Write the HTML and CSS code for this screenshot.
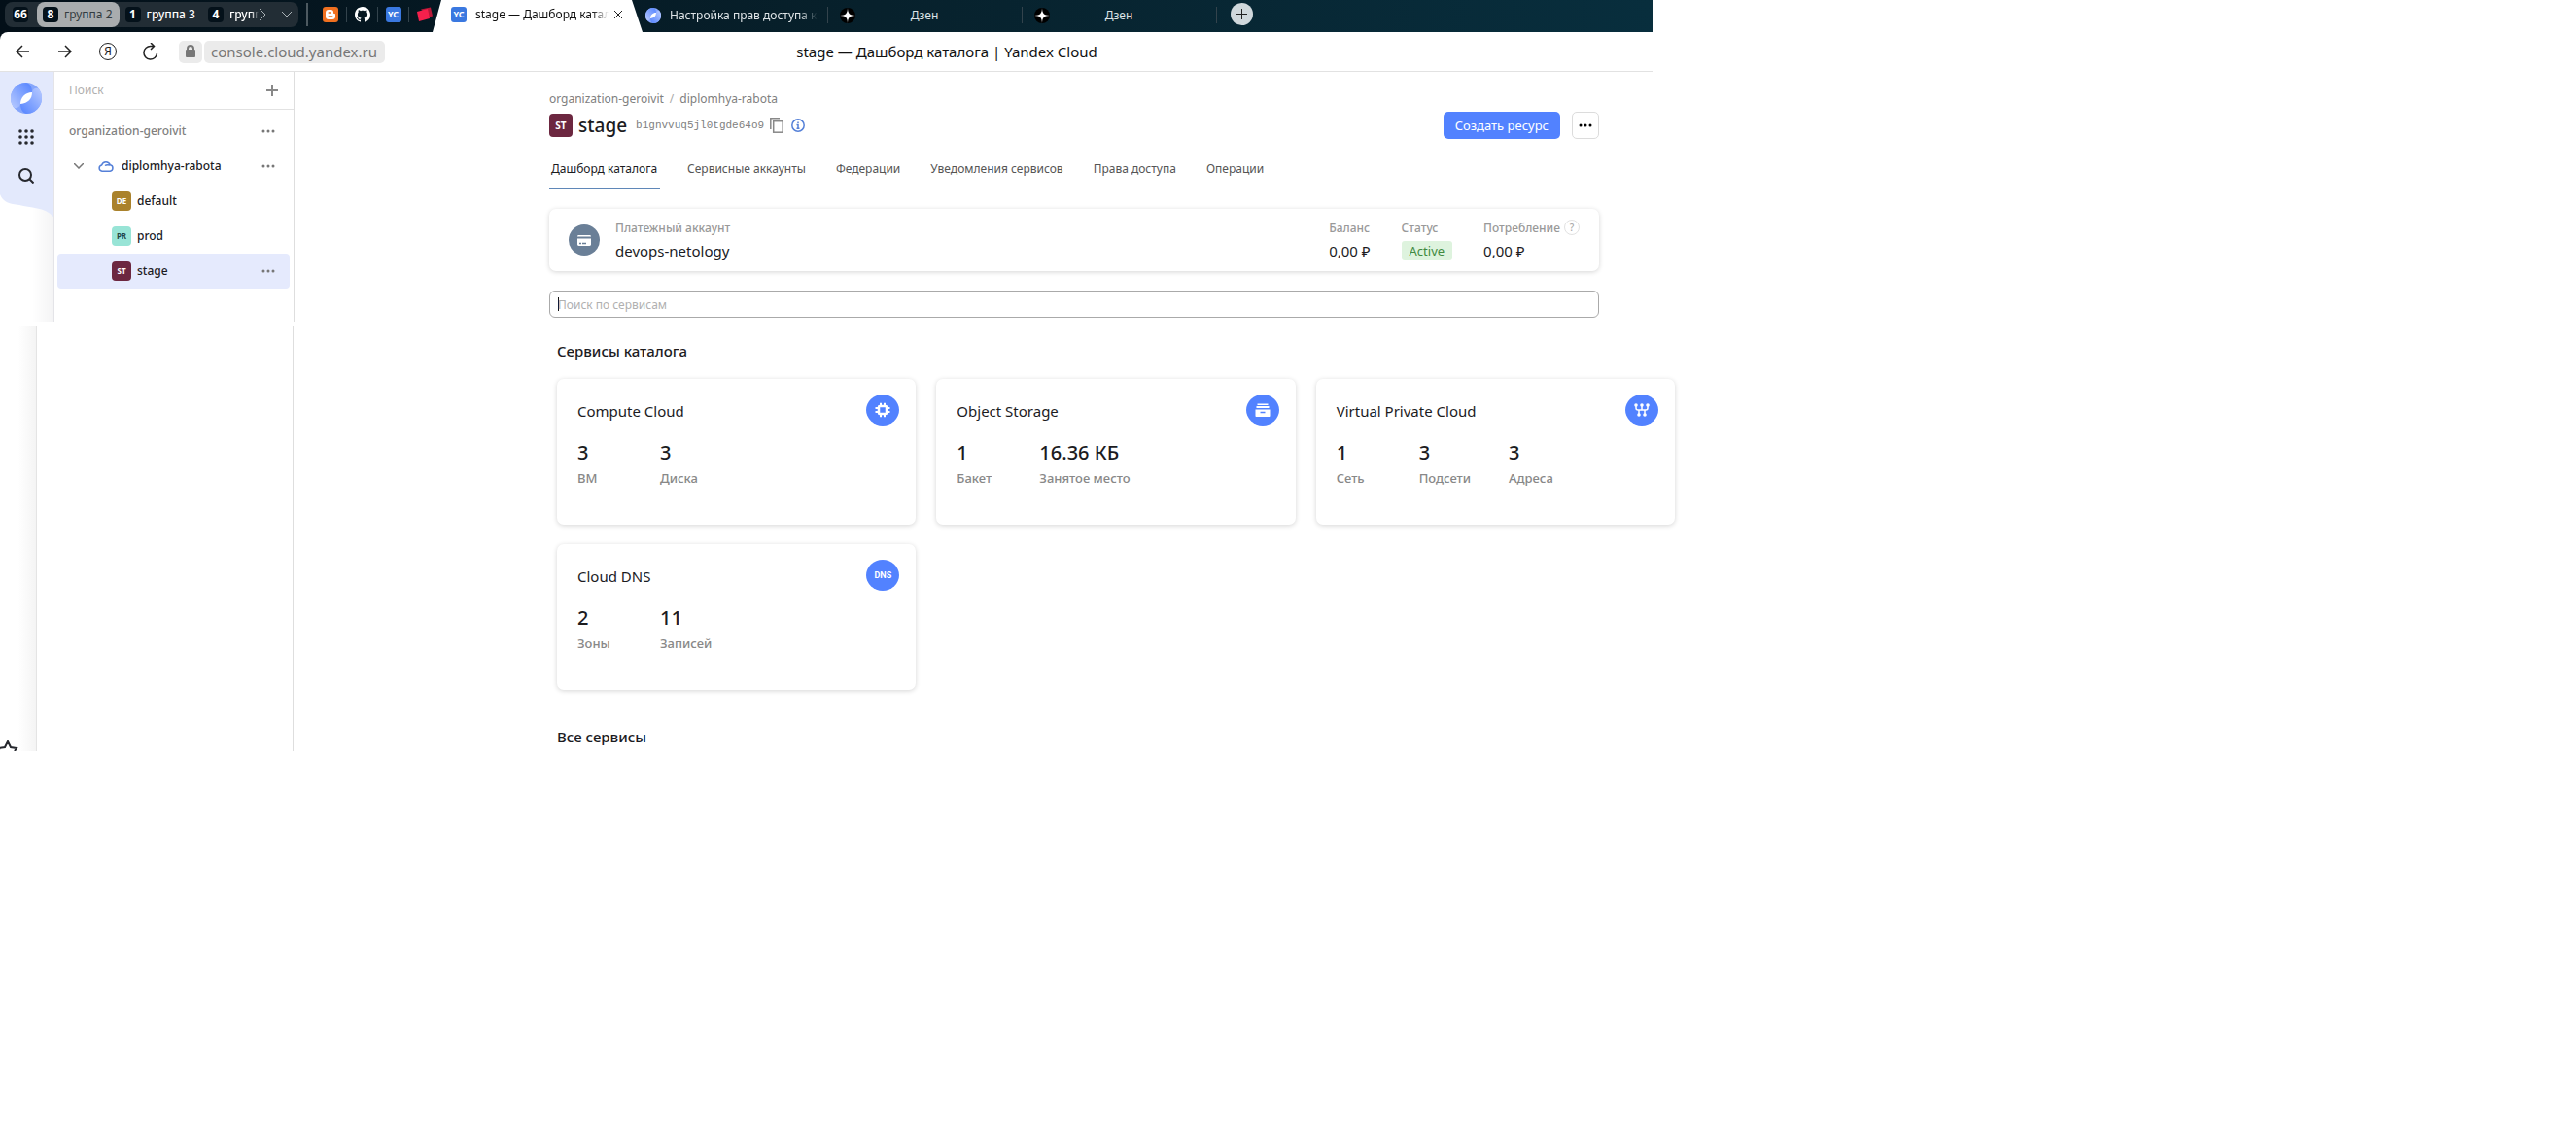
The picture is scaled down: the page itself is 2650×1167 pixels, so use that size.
FILE: index.html
```html
<!DOCTYPE html>
<html lang="ru">
<head>
<meta charset="utf-8">
<meta name="viewport" content="width=device-width, initial-scale=1">
<title>stage — Дашборд каталога | Yandex Cloud</title>
<link rel="stylesheet" href="styles.css">
</head>
<body>
<svg class="defs" aria-hidden="true">
  <defs>
    <linearGradient id="logoA" x1="0" y1="1" x2="1" y2="0"><stop offset="0" stop-color="#b9cbff"/><stop offset="1" stop-color="#5282ff"/></linearGradient>
    <linearGradient id="logoB" x1="0" y1="1" x2="1" y2="0"><stop offset="0" stop-color="#5282ff"/><stop offset="1" stop-color="#b9cbff"/></linearGradient>
    <symbol id="logo" viewBox="0 0 32 32">
      <circle cx="16" cy="16" r="16" fill="#86a6fb"/>
      <path d="M16 0a16 16 0 0 0-13 25.400C6 27 9 26 10 22c0-7 5-11 12-12C22 5 20 1 16 0z" fill="url(#logoA)"/>
      <path d="M16 32A16 16 0 0 0 29 6.600C26 5 23 6 22 10c0 7-5 11-12 12 0 5 2 9 6 10z" fill="url(#logoB)"/>
      <path d="M22 10c0 7-4 11-12 12 0-7 5-12 12-12z" fill="#fff"/>
    </symbol>
    <symbol id="dots" viewBox="0 0 14 4"><circle cx="2" cy="2" r="1.500"/><circle cx="7" cy="2" r="1.500"/><circle cx="12" cy="2" r="1.500"/></symbol>
    <symbol id="zen" viewBox="0 0 16 16"><circle cx="8" cy="8" r="8" fill="#000"/><path d="M8 0c.2 6 2 7.800 8 8-6 .2-7.800 2-8 8-.2-6-2-7.800-8-8 6-.2 7.800-2 8-8z" fill="#fff"/></symbol>
  </defs>
</svg>
<div class="window">
  <header class="chrome">
    <div class="strip">
      <div class="groups">
        <button class="group"><b class="count">66</b></button>
        <button class="group current"><b class="count">8</b>группа 2</button>
        <button class="group"><b class="count">1</b>группа 3</button>
        <button class="group cut"><b class="count">4</b><span class="fade">групп</span><svg width="8" height="12" viewBox="0 0 8 12"><path d="M1 0l6 6-6 6"/></svg></button>
        <button class="group more" aria-label="Все группы"><svg width="10" height="6" viewBox="0 0 10 6"><path d="M0 0l5 5 5-5"/></svg></button>
      </div>
      <div class="pins">
        <button class="pin" aria-label="Blogger"><svg width="16" height="16" viewBox="0 0 16 16"><rect width="16" height="16" rx="3" fill="#f07020"/><path d="M6 3h2.500A2.500 2.500 0 0 1 11 5.500c0 1 .3 1.500 1 1.500s1 .4 1 1v2a3 3 0 0 1-3 3H6a3 3 0 0 1-3-3V6a3 3 0 0 1 3-3z" fill="#fff"/><path d="M6.200 6h2M6.200 10h3.600" stroke="#f07020" stroke-width="1.500" stroke-linecap="round"/></svg></button>
        <button class="pin" aria-label="GitHub"><svg width="16" height="16" viewBox="0 0 16 16"><path fill="#fff" d="M8 0C3.580 0 0 3.580 0 8c0 3.540 2.290 6.530 5.470 7.590.4.070.55-.17.55-.38 0-.19-.010-.82-.010-1.490-2.010.37-2.530-.49-2.690-.94-.090-.23-.48-.94-.82-1.130-.28-.15-.68-.52-.010-.53.63-.010 1.080.58 1.230.82.720 1.210 1.870.87 2.330.66.070-.52.280-.87.510-1.070-1.780-.2-3.640-.89-3.640-3.950 0-.87.310-1.590.82-2.150-.080-.2-.36-1.020.080-2.120 0 0 .67-.21 2.200.82.640-.18 1.320-.27 2-.27s1.360.090 2 .27c1.530-1.040 2.200-.82 2.200-.82.440 1.100.16 1.920.080 2.120.51.560.82 1.270.82 2.150 0 3.070-1.870 3.750-3.650 3.950.29.250.54.730.54 1.480 0 1.070-.010 1.930-.010 2.200 0 .21.150.46.550.38A8 8 0 0 0 16 8c0-4.420-3.580-8-8-8z"/></svg></button>
        <button class="pin"><b class="yc">YC</b></button>
        <button class="pin" aria-label="Книги"><svg width="16" height="16" viewBox="0 0 16 16"><path d="M4 2.500L14 .5l2 9-3 1z" fill="#b81838"/><path d="M0 5l11-3 2 10L2 15z" fill="#f4204c"/></svg></button>
      </div>
      <div class="tab active"><b class="yc">YC</b><span class="fade">stage — Дашборд каталога</span><button class="close" aria-label="Закрыть вкладку"><svg width="8" height="8" viewBox="0 0 8 8"><path d="M0 0l8 8M8 0L0 8"/></svg></button></div>
      <div class="tab"><svg width="16" height="16"><use href="#logo"/></svg><span class="fade">Настройка прав доступа к</span></div>
      <div class="tab short"><svg width="16" height="16"><use href="#zen"/></svg><span>Дзен</span></div>
      <div class="tab short"><svg width="16" height="16"><use href="#zen"/></svg><span>Дзен</span></div>
      <button class="newtab" aria-label="Новая вкладка"><svg width="11" height="11" viewBox="0 0 11 11"><path d="M5.500 0v11M0 5.500h11"/></svg></button>
    </div>
    <div class="toolbar">
      <button class="tool" aria-label="Назад"><svg width="14" height="14" viewBox="0 0 14 14"><path d="M14 7H1M7 1L1 7l6 6"/></svg></button>
      <button class="tool" aria-label="Вперёд"><svg width="14" height="14" viewBox="0 0 14 14"><path d="M0 7h13M7 1l6 6-6 6"/></svg></button>
      <button class="tool ya">Я</button>
      <button class="tool" aria-label="Обновить"><svg width="16" height="18" viewBox="0 0 16 18"><path d="M14.500 11A6.800 6.800 0 1 1 8 3.500h3M8 0l3.500 3.500L8 7"/></svg></button>
      <div class="address">
        <span class="lock"><svg width="12" height="14" viewBox="0 0 12 14"><path d="M3 6V4a3 3 0 0 1 6 0v2" fill="none" stroke="#777" stroke-width="2"/><rect x="1" y="5" width="10" height="8" rx="1" fill="#777"/></svg></span>
        <a class="url" href="#">console.cloud.yandex.ru</a>
      </div>
      <div class="pagetitle">stage — Дашборд каталога | Yandex Cloud</div>
    </div>
  </header>

  <div class="workspace">
    <aside class="side">
      <div class="side-top">
        <nav class="rail">
          <svg class="wave" width="55" height="149" viewBox="0 0 55 149" aria-hidden="true"><path d="M0 0h55v149C46 139 31 140 20 137 10 136 3 134 0 126z" fill="#e3e9fc"/></svg>
          <a href="#" aria-label="Yandex Cloud"><svg width="32" height="32"><use href="#logo"/></svg></a>
          <button aria-label="Все сервисы"><svg width="16" height="16" viewBox="0 0 16 16" fill="#26282e"><circle cx="2" cy="2" r="1.800"/><circle cx="8" cy="2" r="1.800"/><circle cx="14" cy="2" r="1.800"/><circle cx="2" cy="8" r="1.800"/><circle cx="8" cy="8" r="1.800"/><circle cx="14" cy="8" r="1.800"/><circle cx="2" cy="14" r="1.800"/><circle cx="8" cy="14" r="1.800"/><circle cx="14" cy="14" r="1.800"/></svg></button>
          <button aria-label="Поиск"><svg width="16" height="16" viewBox="0 0 16 16" fill="none" stroke="#26282e" stroke-width="2"><circle cx="7" cy="7" r="6"/><path d="M11.500 11.500l4 4"/></svg></button>
        </nav>
        <div class="tree">
          <div class="find"><input type="text" placeholder="Поиск" aria-label="Поиск"><button aria-label="Добавить"><svg width="12" height="12" viewBox="0 0 12 12"><path d="M6 0v12M0 6h12"/></svg></button></div>
          <ul class="nodes">
            <li class="node org"><a href="#">organization-geroivit</a><button aria-label="Действия"><svg width="14" height="4"><use href="#dots"/></svg></button></li>
            <li class="node cloud"><svg width="10" height="6" viewBox="0 0 10 6"><path d="M0 0l5 5 5-5" fill="none" stroke="#777" stroke-width="1.500"/></svg><svg width="16" height="12" viewBox="0 0 16 12"><path d="M4 11.200a3.200 3.200 0 0 1-.4-6.300A4.600 4.600 0 0 1 12.300 4.700a3.300 3.300 0 0 1-.1 6.500zM7 5.500c1-.8 3-1 5-.5" fill="none" stroke="#5580d8" stroke-width="1.500"/></svg><a href="#">diplomhya-rabota</a><button aria-label="Действия"><svg width="14" height="4"><use href="#dots"/></svg></button></li>
            <li class="node folder"><b class="badge de">DE</b><a href="#">default</a></li>
            <li class="node folder"><b class="badge pr">PR</b><a href="#">prod</a></li>
            <li class="node folder selected"><b class="badge st">ST</b><a href="#">stage</a><button aria-label="Действия"><svg width="14" height="4"><use href="#dots"/></svg></button></li>
          </ul>
        </div>
      </div>
      <div class="side-bottom">
        <div class="rail-lower"><button aria-label="Избранное"><svg width="20" height="11" viewBox="0 0 20 11"><path d="M-4 12l3-3-1-1 7-1 3-6 3 6 6 1-2 3" fill="none" stroke="#26282e" stroke-width="2"/></svg></button></div>
      </div>
    </aside>

    <main class="main">
      <nav class="crumbs"><a href="#">organization-geroivit</a><i>/</i><a href="#">diplomhya-rabota</a></nav>
      <div class="head">
        <b class="badge st big">ST</b>
        <h1>stage</h1>
        <code>b1gnvvuq5jl0tgde64o9</code>
        <button class="bare" aria-label="Скопировать"><svg width="14" height="16" viewBox="0 0 14 16" fill="none" stroke="#888" stroke-width="1.500"><path d="M.8 12V.8H10"/><rect x="3.700" y="3.700" width="9.500" height="11.500"/></svg></button>
        <button class="bare" aria-label="Информация"><svg width="14" height="14" viewBox="0 0 14 14"><circle cx="7" cy="7" r="6.200" fill="none" stroke="#5580d8" stroke-width="1.500"/><path d="M5.500 6.500H7V10M5.500 10.200h3M7 3.500v1.500" fill="none" stroke="#5580d8" stroke-width="1.500"/></svg></button>
        <button class="create">Создать ресурс</button>
        <button class="actions" aria-label="Действия"><svg width="14" height="4"><use href="#dots"/></svg></button>
      </div>
      <nav class="tabs"><a class="on" href="#">Дашборд каталога</a><a href="#">Сервисные аккаунты</a><a href="#">Федерации</a><a href="#">Уведомления сервисов</a><a href="#">Права доступа</a><a href="#">Операции</a></nav>
      <section class="billing">
        <svg class="bill-icon" width="32" height="32" viewBox="0 0 32 32"><circle cx="16" cy="16" r="16" fill="#6a7f97"/><path d="M9 12.500c0-1 .5-1.500 1.500-1.500h11c1 0 1.500.5 1.500 1.500zM9 14.500h14v6c0 .7-.5 1.500-1.500 1.500h-11c-1 0-1.500-.8-1.500-1.500z" fill="#fff"/><path d="M11 19.500h2M14 19.500h4" stroke="#6a7f97" stroke-width="1.500"/></svg>
        <dl class="fact grow"><dt>Платежный аккаунт</dt><dd>devops-netology</dd></dl>
        <dl class="fact"><dt>Баланс</dt><dd>0,00 ₽</dd></dl>
        <dl class="fact"><dt>Статус</dt><dd class="status">Active</dd></dl>
        <dl class="fact"><dt>Потребление<button class="help" aria-label="Справка">?</button></dt><dd>0,00 ₽</dd></dl>
      </section>
      <input class="search" type="text" placeholder="Поиск по сервисам" aria-label="Поиск по сервисам">

      <section class="services">
        <h2>Сервисы каталога</h2>
        <div class="grid">
          <article class="card">
            <header><h3>Compute Cloud</h3><span class="disc"><svg width="16" height="16" viewBox="0 0 16 16" fill="none" stroke="#fff"><rect x="4" y="4" width="8" height="8" rx="1" stroke-width="2.500"/><path d="M6 .8V4M10 .8V4M6 12v3.200M10 12v3.200M.5 6H4M.5 10H4M12 6h3.500M12 10h3.500" stroke-width="2"/></svg></span></header>
            <div class="stats"><dl><dd>3</dd><dt>ВМ</dt></dl><dl><dd>3</dd><dt>Диска</dt></dl></div>
          </article>
          <article class="card">
            <header><h3>Object Storage</h3><span class="disc"><svg width="16" height="16" viewBox="0 0 16 16"><path d="M2.500 1.500h11v1.500h-11zM1.500 4h13v2h-13zM.5 7.500h15V14c0 .6-.4 1-1 1h-13c-.6 0-1-.4-1-1z" fill="#fff"/><path d="M5.500 10.500h5" stroke="#5282ff" stroke-width="1.500"/></svg></span></header>
            <div class="stats"><dl><dd>1</dd><dt>Бакет</dt></dl><dl><dd>16.36 КБ</dd><dt>Занятое место</dt></dl></div>
          </article>
          <article class="card">
            <header><h3>Virtual Private Cloud</h3><span class="disc"><svg width="16" height="16" viewBox="0 0 16 16" fill="none" stroke="#fff" stroke-width="1.500"><path d="M2 3v3q0 2 2 2h8q2 0 2-2V3M8 3v5M5 8v5M11 8v5"/><g fill="#fff" stroke="none"><circle cx="2" cy="3" r="1.800"/><circle cx="8" cy="3" r="1.800"/><circle cx="14" cy="3" r="1.800"/><circle cx="5" cy="13" r="1.800"/><circle cx="11" cy="13" r="1.800"/></g></svg></span></header>
            <div class="stats"><dl><dd>1</dd><dt>Сеть</dt></dl><dl><dd>3</dd><dt>Подсети</dt></dl><dl><dd>3</dd><dt>Адреса</dt></dl></div>
          </article>
          <article class="card">
            <header><h3>Cloud DNS</h3><span class="disc">DNS</span></header>
            <div class="stats"><dl><dd>2</dd><dt>Зоны</dt></dl><dl><dd>11</dd><dt>Записей</dt></dl></div>
          </article>
        </div>
        <h2>Все сервисы</h2>
      </section>
    </main>
  </div>
</div>
</body>
</html>
```
FILE: styles.css
```css
* { box-sizing: border-box; }
body { margin: 0; background: #fff; color: #1c1c1f; font: 13px/18px "Noto Sans", "Open Sans", sans-serif; }
button { margin: 0; padding: 0; border: 0; background: none; color: inherit; font: inherit; display: flex; align-items: center; justify-content: center; flex: none; }
a { color: inherit; text-decoration: none; }
h1, h2, h3, dl, dd, ul { margin: 0; padding: 0; font-weight: 500; }
svg { flex: none; }
.defs { position: absolute; width: 0; height: 0; }
.window { max-width: 1700px; }

/* Browser chrome */
.chrome { background: linear-gradient(90deg, #030f18, #07202b 50%, #082e3d); }
.strip { display: flex; align-items: center; height: 33px; color: #dde3e6; white-space: nowrap; }
.groups { display: flex; align-items: center; width: 302px; height: 26px; margin: 0 8px 4px 5px; padding-left: 4px; border-radius: 8px; background: #222d35; color: #fff; }
.group { height: 26px; padding: 0 7px 0 6px; gap: 6px; border-radius: 8px; font-size: 12px; font-weight: 500; }
.group:first-child { padding: 0 9px 0 4px; }
.group.current { background: #a9acae; color: #333b40; font-weight: 400; }
.count { min-width: 16px; height: 16px; border-radius: 4px; background: #04111a; color: #fff; font: 700 12px/16px "Noto Sans", sans-serif; text-align: center; }
.group.cut { flex: 1; justify-content: flex-start; }
.group.cut .fade { width: 30px; }
.group svg { fill: none; stroke: #aab2b6; }
.cut svg { margin-left: -6px; }
.group.more { padding: 0 7px; }
.fade { overflow: hidden; mask-image: linear-gradient(90deg, #000 75%, transparent); }
.pins { display: flex; height: 24px; margin: 0 -7px 3px 0; padding-left: 7px; border-left: 2px solid #4c5960; }
.pin { width: 32px; height: 16px; align-self: center; }
.pin + .pin { border-left: 1px solid #33434c; }
.yc { width: 16px; height: 16px; flex: none; border-radius: 3px; background: #3a78e0; color: #fff; font: 700 9px/16px "Noto Sans", sans-serif; text-align: center; }
.tab { display: flex; align-items: center; gap: 9px; width: 200px; height: 17px; margin-bottom: 2px; padding: 0 10px 0 12px; border-right: 1px solid #33434c; font-size: 12px; }
.tab .fade { flex: 1; mask-image: linear-gradient(90deg, #000 88%, transparent); }
.tab.short span { flex: 1; padding-right: 28px; text-align: center; }
.tab.active { width: 216px; height: 33px; margin: 0 -9px 0 0; padding: 0 21px 3px 19px; border: 0; background: #fff; color: #111; clip-path: polygon(9px 0, 205px 0, 100% 100%, 0 100%); }
.close { margin-left: -3px; }
.close svg, .newtab svg { stroke: #222; stroke-width: 1; }
.newtab { width: 23px; height: 23px; margin: 0 0 4px 14px; border-radius: 50%; background: #d0d8dc; }
.toolbar { display: flex; align-items: center; height: 41px; padding-left: 8px; border-bottom: 1px solid #e2e2e2; border-radius: 8px 0 0 0; background: #fff; }
.tool { width: 30px; height: 30px; margin-right: 14px; }
.tool svg { fill: none; stroke: #222; stroke-width: 1.5; }
.ya { width: 18px; height: 18px; margin: 0 20px 0 6px; border: 1px solid #222; border-radius: 50%; font-size: 12px; }
.address { display: flex; gap: 2px; }
.lock, .url { height: 23px; border-radius: 5px; background: #ebebeb; }
.lock { display: flex; align-items: center; justify-content: center; width: 24px; }
.url { padding: 0 8px 0 7px; color: #777; font-size: 15px; line-height: 23px; }
.pagetitle { flex: 1; padding-right: 148px; text-align: center; color: #111; font-size: 15px; }

/* Left side */
.workspace { display: flex; }
.side { display: flex; flex-direction: column; gap: 4px; width: 303px; flex: none; }
.side-top { display: flex; height: 257px; }
.rail { position: relative; display: flex; flex-direction: column; align-items: center; width: 55px; padding: 11px 1px 0 0; background: linear-gradient(90deg, #fff 60%, #f4f4f5); }
.rail a, .rail button { position: relative; height: 40px; }
.rail a { height: 36px; }
.wave { position: absolute; left: 0; top: 0; }
.tree { flex: 1; border-right: 1px solid #dedede; border-left: 1px solid #e4e4e8; }
.find { display: flex; align-items: center; height: 39px; padding: 0 16px 0 15px; border-bottom: 1px solid #e2e2e2; }
.find input { flex: 1; min-width: 0; padding: 0; border: 0; outline: 0; font: 12px/18px "Noto Sans", sans-serif; }
input::placeholder { color: #b0b0b0; opacity: 1; }
.find svg { stroke: #888; stroke-width: 2; }
.nodes { padding: 4px 4px 0 3px; list-style: none; }
.node { display: flex; align-items: center; height: 36px; padding: 0 15px 0 12px; border-radius: 4px; font-size: 12px; }
.node button { margin-left: auto; }
.node button svg { fill: #777; }
.org { color: #808080; }
.cloud { gap: 8px; padding-left: 17px; }
.cloud svg + svg { margin-left: 7px; }
.folder { gap: 6px; padding-left: 56px; }
.selected { background: #e5eafd; }
.badge { width: 20px; height: 20px; flex: none; border-radius: 4px; font: 700 8px/20px "Noto Sans", sans-serif; text-align: center; color: #fff; }
.de { background: #aa822c; }
.pr { background: #98e4d6; color: #27443f; }
.st { background: #6c2740; }
.big { width: 24px; height: 24px; font-size: 10px; line-height: 24px; }
.side-bottom { display: flex; flex: 1; margin-right: 1px; border-right: 1px solid #dedede; }
.rail-lower { display: flex; align-items: flex-end; width: 38px; border-right: 1px solid #e4e4e4; background: linear-gradient(90deg, #fff 50%, #f4f4f4); }

/* Folder dashboard */
.main { flex: 1; min-width: 0; padding: 19px 55px 5px 262px; }
.crumbs { display: flex; gap: 6px; height: 18px; color: #808080; font-size: 12px; }
.crumbs i { font-style: normal; color: #aaa; }
.head { display: flex; align-items: center; height: 36px; }
.head h1 { margin-left: 6px; font-size: 19px; line-height: 24px; }
.head code { margin: 0 6px 0 9px; color: #808080; font: 11px/18px "Liberation Mono", monospace; }
.bare + .bare { margin-left: 8px; }
.create { height: 28px; margin-left: auto; padding: 0 12px; border-radius: 5px; background: #5282ff; color: #fff; }
.actions { width: 28px; height: 28px; margin-left: 12px; border: 1px solid #dcdcdc; border-radius: 5px; }
.tabs { display: flex; gap: 26px; height: 48px; border-bottom: 1px solid #e2e2e2; color: #555; font-size: 12px; }
.tabs a { height: 48px; padding: 18px 3px 0 2px; white-space: nowrap; }
.tabs .on { border-bottom: 2px solid #5f87b8; color: #1c1c1f; }
.billing, .card { border-radius: 7px; background: #fff; box-shadow: 0 1px 5px rgba(0, 0, 0, .17); }
.billing { display: flex; gap: 32px; height: 64px; margin-top: 20px; padding: 11px 20px 0; }
.bill-icon { margin: 5px -16px 0 0; }
.grow { flex: 1; }
.fact dt { display: flex; height: 18px; color: #999; font-size: 12px; }
.fact dd { margin-top: 5px; font-size: 15px; line-height: 18px; font-weight: 400; }
.fact .status { height: 20px; margin-top: 4px; padding: 0 8px; border-radius: 3px; background: #def3de; color: #418a41; font-size: 13px; line-height: 20px; }
.help { width: 16px; height: 16px; margin-left: 4px; border: 1px solid #e2e2e2; border-radius: 50%; color: #aaa; font-size: 10px; }
.search { display: block; width: 100%; height: 28px; margin-top: 20px; padding: 0 8px; border: 1px solid #aaa; border-radius: 6px; outline: 0; background: linear-gradient(#111, #111) 8px 6px / 1px 14px no-repeat #fff; font: 12px/18px "Noto Sans", sans-serif; }
.services { margin: 24px -78px 0 8px; }
.services h2 { font-size: 15px; line-height: 20px; }
.grid { display: grid; grid-template-columns: repeat(3, 1fr); gap: 20px 21px; margin: 19px 0 38px; }
.card { height: 150px; padding: 16px 17px 0 21px; }
.card header { display: flex; justify-content: space-between; }
.card h3 { font-size: 15px; line-height: 34px; font-weight: 400; }
.disc { display: flex; align-items: center; justify-content: center; width: 34px; height: 32px; border-radius: 50%; background: #5282ff; color: #fff; font: 700 9px/32px "Liberation Sans Narrow", Roboto, sans-serif; }
.stats { display: flex; gap: 39px; padding-top: 13px; }
.stats dl { display: flex; flex-direction: column; min-width: 46px; }
.stats dd { font-size: 20px; line-height: 26px; }
.stats dt { margin-top: 4px; color: #888; font-size: 13px; white-space: nowrap; }
```
